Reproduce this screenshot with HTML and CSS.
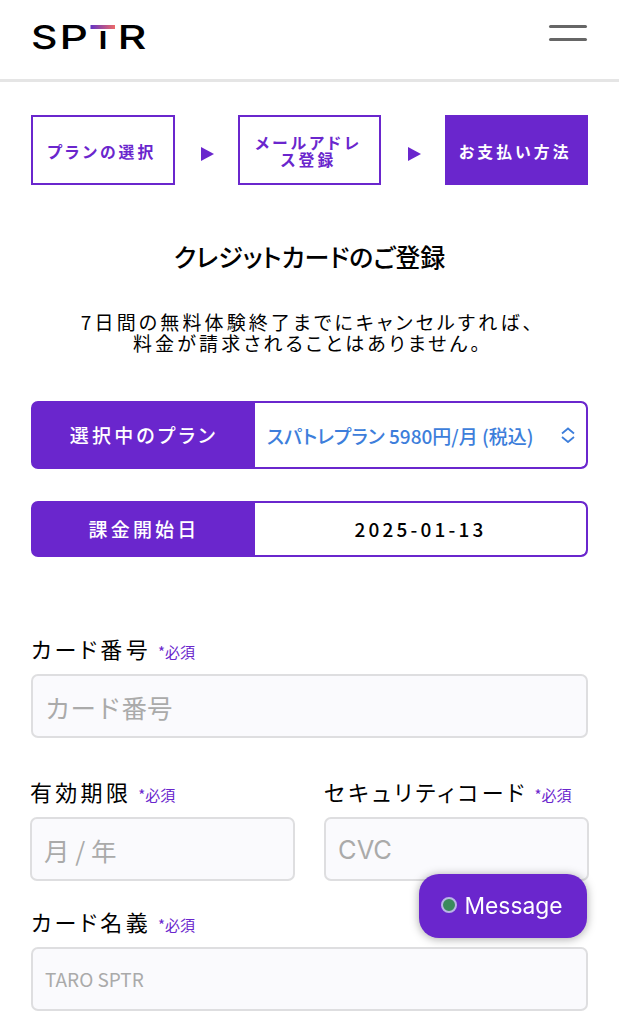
FILE: index.html
```
<!DOCTYPE html>
<html lang="ja">
  <head>
    <meta charset="UTF-8" />
    <meta name="viewport" content="width=device-width, initial-scale=1.0" />
    <title>SPTR</title>
    <link rel="stylesheet" href="styles.css">
  </head>

  <body>
    <!-- HEADER -->
    <header>
      <svg class="logo" width="116" height="28" viewBox="0 0 116 28" role="img" aria-label="SPTR">
        <defs>
          <linearGradient id="bar" x1="0" x2="1">
            <stop offset="0" stop-color="#6433c4" />
            <stop offset="1" stop-color="#ec6a68" />
          </linearGradient>
        </defs>
        <text x="0" y="26" textLength="26.5" lengthAdjust="spacingAndGlyphs">S</text>
        <text x="28.5" y="26" textLength="28.5" lengthAdjust="spacingAndGlyphs">P</text>
        <text x="59" y="26" textLength="26" lengthAdjust="spacingAndGlyphs">T</text>
        <text x="86.5" y="26" textLength="29" lengthAdjust="spacingAndGlyphs">R</text>
        <rect x="58" y="0" width="28" height="8" fill="#fff" />
        <rect x="59.5" y="2" width="24.5" height="4" fill="url(#bar)" />
      </svg>
      <button class="menu" aria-label="メニュー"><span></span><span></span></button>
    </header>

    <main>
      <!-- STEPS -->
      <ol class="steps">
        <li>プランの選択</li>
        <li>メールアドレス登録</li>
        <li class="current">お支払い方法</li>
      </ol>

      <h1>クレジットカードのご登録</h1>
      <p class="lead">7日間の無料体験終了までにキャンセルすれば、<br>料金が請求されることはありません。</p>

      <!-- PLAN -->
      <dl class="plan">
        <dt>選択中のプラン</dt>
        <dd class="select">
          <span>スパトレプラン 5980円/月 (税込)</span>
          <svg width="14" height="16" viewBox="0 0 14 16"><path d="M1 6.5 7 1.5 13 6.5M1 10 7 15 13 10" /></svg>
        </dd>
      </dl>
      <dl class="plan date">
        <dt>課金開始日</dt>
        <dd>2025-01-13</dd>
      </dl>

      <!-- CARD -->
      <form>
        <div class="field">
          <label for="number">カード番号<em>*必須</em></label>
          <input id="number" type="text" placeholder="カード番号" />
        </div>
        <div class="row">
          <div class="field">
            <label for="expiry">有効期限<em>*必須</em></label>
            <input id="expiry" type="text" placeholder="月 / 年" />
          </div>
          <div class="field">
            <label for="cvc">セキュリティコード<em>*必須</em></label>
            <input id="cvc" type="text" placeholder="CVC" />
          </div>
        </div>
        <div class="field">
          <label for="name">カード名義<em>*必須</em></label>
          <input id="name" type="text" placeholder="TARO SPTR" />
        </div>
      </form>
    </main>

    <button class="message"><i></i>Message</button>
  </body>
</html>
```

FILE: styles.css
```
* {
  box-sizing: border-box;
}
body {
  margin: 0;
  height: 1024px;
  overflow: hidden;
  background-color: #fff;
  color: #000;
  font-family: "Noto Sans CJK JP", sans-serif;
  font-feature-settings: "palt";
}
header {
  display: flex;
  justify-content: space-between;
  align-items: flex-start;
  height: 82px;
  padding: 23px 32px 0 31px;
  border-bottom: 3px solid #e5e5e5;
}
.logo {
  overflow: visible;
}
.logo text {
  font-family: Inter, sans-serif;
  font-size: 33px;
  font-weight: 500;
  fill: #000;
}
.menu {
  display: flex;
  flex-direction: column;
  gap: 10px;
  margin-top: 2px;
  padding: 0;
  border: 0;
  background: none;
}
.menu span {
  width: 38px;
  height: 3px;
  border-radius: 2px;
  background-color: #666;
}
main {
  padding: 33px 31px 0;
}
.steps {
  display: flex;
  justify-content: space-between;
  align-items: center;
  margin: 0;
  padding: 0;
  list-style: none;
}
.steps li {
  display: flex;
  justify-content: center;
  align-items: center;
  position: relative;
  width: 143.5px;
  height: 70px;
  padding: 2px 11px 0 9px;
  border: 2px solid #6a26cd;
  color: #6a26cd;
  font-size: 15.8px;
  font-weight: 700;
  line-height: 17px;
  letter-spacing: 3.1px;
  text-align: center;
}
.steps li + li::before {
  content: "";
  position: absolute;
  left: -39px;
  top: 30px;
  border-left: 13px solid #6a26cd;
  border-top: 7px solid transparent;
  border-bottom: 7px solid transparent;
}
.steps .current {
  background-color: #6a26cd;
  color: #fff;
}
h1 {
  margin: 53px 0 0;
  font-size: 25px;
  font-weight: 500;
  line-height: 36px;
  text-align: center;
}
.lead {
  margin: 38px 3px 48px 0;
  font-size: 19px;
  line-height: 20.5px;
  letter-spacing: 3.15px;
  text-align: center;
}
.plan {
  display: flex;
  height: 68px;
  margin: 0 0 32px;
  border: 2px solid #6a26cd;
  border-radius: 7px;
  background-color: #6a26cd;
  overflow: hidden;
}
.plan dt,
.plan dd {
  display: flex;
  justify-content: center;
  align-items: center;
  margin: 0;
  padding-bottom: 2px;
  font-size: 19px;
  font-weight: 500;
  letter-spacing: 3.2px;
}
.plan dt {
  width: 222px;
  color: #fff;
}
.plan dd {
  flex: 1;
  border-radius: 0 5px 5px 0;
  background-color: #fff;
}
.plan .select {
  justify-content: space-between;
  padding: 0 11px 0 12px;
  color: #3d7edb;
  letter-spacing: 0;
  white-space: nowrap;
}
.select path {
  fill: none;
  stroke: #3d7edb;
  stroke-width: 1.8;
}
.date {
  height: 56px;
  margin-bottom: 75px;
}
.field label {
  display: flex;
  align-items: baseline;
  height: 42px;
  font-size: 22px;
  line-height: 32px;
  letter-spacing: 3.3px;
  white-space: nowrap;
}
.field em {
  margin-left: 7px;
  color: #6a26cd;
  font-size: 15px;
  font-style: normal;
  letter-spacing: 0;
}
.field input {
  display: block;
  width: 100%;
  height: 64px;
  padding: 0 12px;
  border: 2px solid #dedee0;
  border-radius: 7px;
  background-color: #fafafd;
  font-family: "Noto Sans CJK JP", sans-serif;
  font-size: 25.5px;
}
.field input::placeholder {
  color: #aaa;
}
.row {
  display: grid;
  grid-template-columns: 265px 265px;
  justify-content: space-between;
  margin: 37px -1px 24px;
}
.field #cvc {
  font-family: Inter, sans-serif;
}
.field #name {
  padding-bottom: 2px;
  font-size: 19px;
}
.message {
  display: flex;
  justify-content: center;
  align-items: center;
  gap: 7px;
  position: fixed;
  right: 32px;
  bottom: 86px;
  width: 168px;
  height: 64px;
  padding: 0 2px 2px 0;
  border: 0;
  border-radius: 20px;
  background-color: #6a26cd;
  box-shadow: 0 1px 10px rgba(0, 0, 0, 0.35);
  color: #fff;
  font-family: Inter, sans-serif;
  font-size: 22.8px;
}
.message i {
  width: 16px;
  height: 16px;
  border: 2px solid #b9b5e6;
  border-radius: 50%;
  background-color: #3a8a5c;
}
```
